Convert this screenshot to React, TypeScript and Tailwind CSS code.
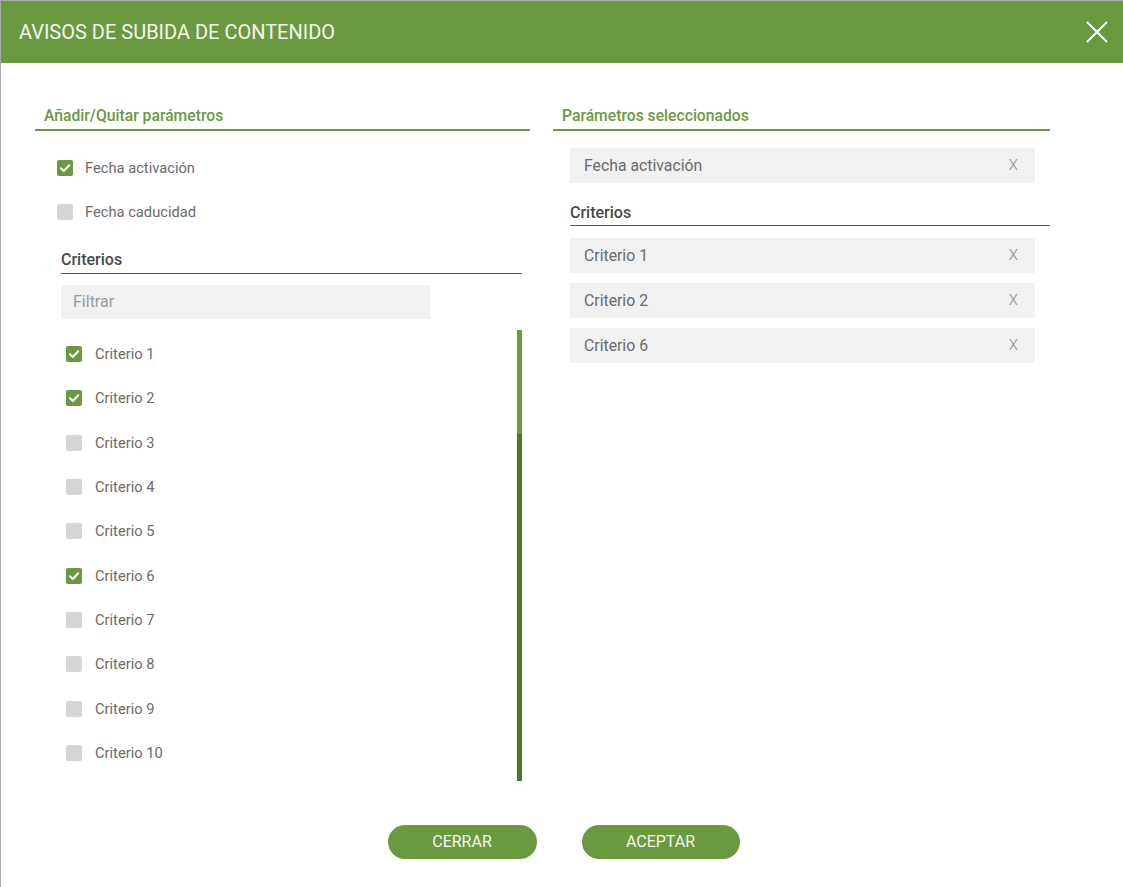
const GREEN = "bg-[#6a9a40]";

function Check({ checked }: { checked: boolean }) {
  return (
    <span
      className={
        checked
          ? "w-4 h-4 rounded-[2px] bg-[#6a9a40] flex items-center justify-center shrink-0"
          : "w-4 h-4 rounded-[2px] bg-[#d5d5d5] shrink-0"
      }
    >
      {checked && (
        <svg width="12" height="12" viewBox="0 0 12 12" fill="none">
          <path d="M2 6.2 L4.8 9 L10.2 3.2" stroke="white" strokeWidth="2" strokeLinecap="round" strokeLinejoin="round" />
        </svg>
      )}
    </span>
  );
}

const criterios = [
  { name: "Criterio 1", checked: true },
  { name: "Criterio 2", checked: true },
  { name: "Criterio 3", checked: false },
  { name: "Criterio 4", checked: false },
  { name: "Criterio 5", checked: false },
  { name: "Criterio 6", checked: true },
  { name: "Criterio 7", checked: false },
  { name: "Criterio 8", checked: false },
  { name: "Criterio 9", checked: false },
  { name: "Criterio 10", checked: false },
];

function Selected({ label }: { label: string }) {
  return (
    <div className="h-[35px] w-[465px] bg-[#f0f1f0] flex items-center justify-between pl-[14px] pr-[17px] text-[15.8px] text-[#6b6b6b]">
      <span>{label}</span>
      <span className="text-[15px] text-[#8a8a8a] font-light">X</span>
    </div>
  );
}

export default function App() {
  return (
    <div className="w-[1123px] h-[887px] bg-white border-t border-l border-[#a8a8a8] flex flex-col font-['Roboto',sans-serif] overflow-hidden">
      {/* Header */}
      <div className={`h-[62px] ${GREEN} flex items-center justify-between pl-[18px] pr-[14px] shrink-0`}>
        <h1 className="text-[20px] text-[#f4f6f0]">AVISOS DE SUBIDA DE CONTENIDO</h1>
        <svg width="24" height="24" viewBox="0 0 24 24" fill="none">
          <path d="M2 2 L22 22 M22 2 L2 22" stroke="white" strokeWidth="2" />
        </svg>
      </div>

      {/* Body */}
      <div className="flex-1 flex gap-[23px] pt-[43px] pl-[34px]">
        {/* Left column */}
        <div className="w-[495px] flex flex-col">
          <div className="border-b-2 border-[#6a9a40] px-[9px] pb-[3px] text-[15.7px] leading-[20px] font-medium text-[#6a9a40]">
            Añadir/Quitar parámetros
          </div>

          <div className="pl-[22px] flex flex-col gap-[24px] mt-[27px]">
            <label className="h-[20px] flex items-center gap-[12px] text-[14.7px] text-[#6b6b6b]">
              <Check checked={true} />
              Fecha activación
            </label>
            <label className="h-[20px] flex items-center gap-[12px] text-[14.7px] text-[#6b6b6b]">
              <Check checked={false} />
              Fecha caducidad
            </label>
          </div>

          <div className="ml-[26px] w-[461px] flex flex-col mt-[28px]">
            <div className="border-b border-[#555] pb-[3px] text-[16px] leading-[20px] font-medium text-[#4a4a4a]">
              Criterios
            </div>
            <div className="mt-[11px] w-[369px] h-[34px] bg-[#f0f1f0] flex items-center pl-[12px] text-[16px] text-[#9a9a9a]">
              Filtrar
            </div>
            <div className="mt-[11px] h-[451px] flex">
              <div className="flex-1 overflow-hidden pt-[2px]">
                {criterios.map((c) => (
                  <div key={c.name} className="h-[44.3px] flex items-center gap-[13px] pl-[5px] text-[14.7px] text-[#6b6b6b]">
                    <Check checked={c.checked} />
                    {c.name}
                  </div>
                ))}
              </div>
              <div className="w-[5px] bg-[#4a7a28] flex flex-col">
                <div className="h-[104px] bg-[#6a9a40]" />
              </div>
            </div>
          </div>
        </div>

        {/* Right column */}
        <div className="w-[497px] flex flex-col">
          <div className="border-b-2 border-[#6a9a40] px-[9px] pb-[3px] text-[15.7px] leading-[20px] font-medium text-[#6a9a40]">
            Parámetros seleccionados
          </div>
          <div className="pl-[17px] mt-[17px] flex flex-col">
            <Selected label="Fecha activación" />
            <div className="mt-[20px] w-[480px] border-b border-[#555] pb-[2px] text-[16px] leading-[20px] font-medium text-[#4a4a4a]">
              Criterios
            </div>
            <div className="mt-[12px] flex flex-col gap-[10px]">
              <Selected label="Criterio 1" />
              <Selected label="Criterio 2" />
              <Selected label="Criterio 6" />
            </div>
          </div>
        </div>
      </div>

      {/* Footer */}
      <div className="flex justify-center gap-[45px] pb-[28px] pl-[3px] shrink-0">
        <button className={`w-[149px] h-[34px] rounded-full ${GREEN} text-[16px] text-[#f4f6f0]`}>CERRAR</button>
        <button className={`w-[158px] h-[34px] rounded-full ${GREEN} text-[16px] text-[#f4f6f0]`}>ACEPTAR</button>
      </div>
    </div>
  );
}
